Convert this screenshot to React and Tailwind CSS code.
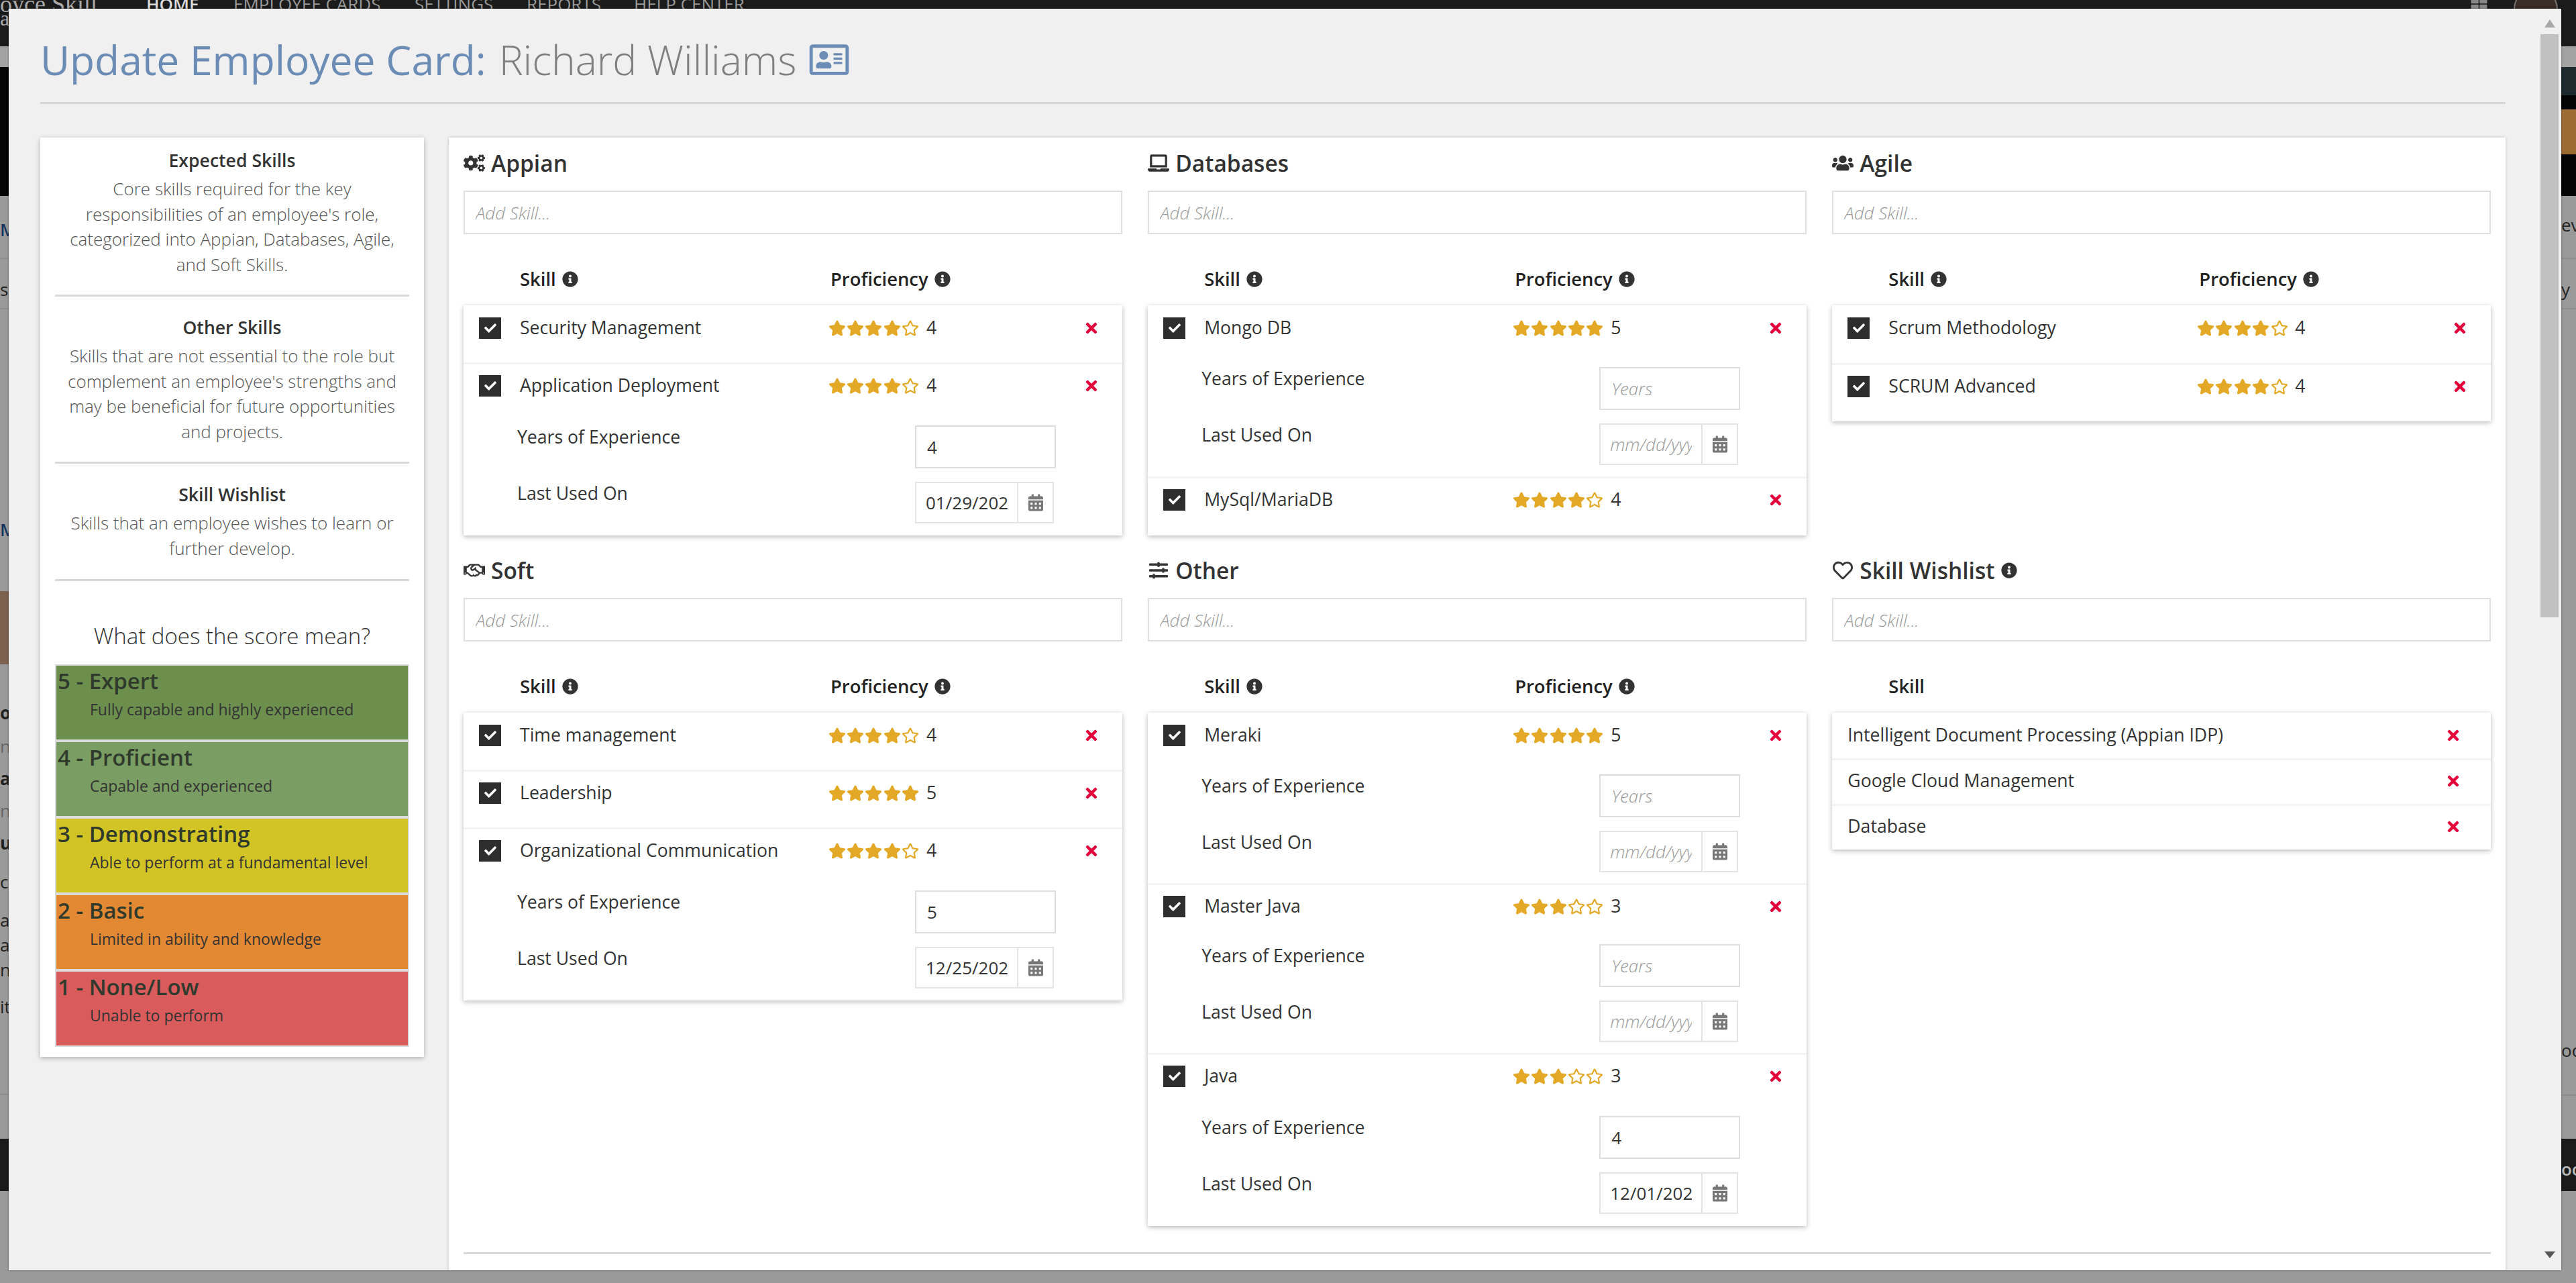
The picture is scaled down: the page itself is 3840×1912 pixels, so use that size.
import React from 'react';
import { FaCogs, FaLaptop, FaUsers, FaRegHandshake, FaSlidersH, FaRegHeart, FaInfoCircle, FaCheck, FaTimes, FaStar, FaRegStar, FaCalendarAlt, FaRegAddressCard, FaThLarge } from 'react-icons/fa';

function Info() {
  return <FaInfoCircle className="ml-[9px] inline-block h-[24px] w-[24px] shrink-0 text-[#333]" />;
}

function Stars({ n }) {
  return (
    <div className="flex w-[137px] shrink-0 items-center">
      {[1, 2, 3, 4, 5].map((i) => (
        <div key={i} className="flex w-[27.4px] justify-center">
          {i <= n ? <FaStar className="h-[24px] w-[26px] text-[#e3a826]" /> : <FaRegStar className="h-[24px] w-[26px] text-[#e3a826]" />}
        </div>
      ))}
    </div>
  );
}

function Check() {
  return (
    <div className="flex h-[32px] w-[33px] shrink-0 items-center justify-center bg-[#2e2e2e]">
      <FaCheck className="h-[18px] w-[18px] text-white" />
    </div>
  );
}

function SkillRow({ name, n, height, detail, gap, years, date }) {
  return (
    <div className={`border-t-[3px] border-[#f3f3f3] pt-[15px] first:border-white first:pt-[14px] ${height}`}>
      <div className="flex h-[33px] items-center pl-[23px] text-[26.6px] text-[#333]">
        <Check />
        <div className="ml-[28px] w-[459px] shrink-0 whitespace-nowrap">{name}</div>
        <Stars n={n} />
        <div className="ml-[10px] w-[236px] shrink-0">{n}</div>
        <FaTimes className="h-[24px] w-[20px] shrink-0 text-[#e2003b]" />
      </div>
      {detail && (
        <div className={`${gap} flex flex-col gap-[20px] text-[26.6px] text-[#333]`}>
          <div className="flex h-[64px] pl-[80px]">
            <div className="mt-[-1px] w-[593px] shrink-0 leading-[36px]">Years of Experience</div>
            <input readOnly value={years} placeholder="Years" className="h-[64px] w-[210px] border-2 border-[#dedede] bg-white px-[16px] text-[26px] text-[#333] outline-none placeholder:font-light placeholder:italic placeholder:text-[#999]" />
          </div>
          <div className="flex h-[62px] pl-[80px]">
            <div className="mt-[-1px] w-[593px] shrink-0 leading-[36px]">Last Used On</div>
            <div className="flex h-[62px] w-[207px] border-2 border-[#e4e4e4] bg-white">
              <input readOnly value={date} placeholder="mm/dd/yyyy" className="w-[152px] border-r-2 border-[#e4e4e4] bg-white pl-[14px] pr-[14px] text-[26px] text-[#333] outline-none placeholder:font-light placeholder:italic placeholder:text-[#999]" />
              <div className="flex flex-1 items-center justify-center">
                <FaCalendarAlt className="h-[26px] w-[22px] text-[#777]" />
              </div>
            </div>
          </div>
        </div>
      )}
    </div>
  );
}

function Section({ icon, title, titleInfo, children, wishlist }) {
  return (
    <div>
      <div className="flex h-[42px] items-center text-[33.5px] font-semibold text-[#333]">
        <span className="mr-[9px] flex w-[32px] justify-center">{icon}</span>
        {title}
        {titleInfo && <Info />}
      </div>
      <input readOnly placeholder="Add Skill..." className="mt-[20px] block h-[65px] w-full border-2 border-[#e0e0e0] bg-white px-[16px] text-[26px] outline-none placeholder:font-light placeholder:italic placeholder:text-[#999]" />
      <div className="mt-[47px] flex h-[40px] items-center pl-[84px] text-[27.4px] font-semibold text-[#222]">
        <div className="flex w-[463px] items-center">
          Skill
          {!wishlist && <Info />}
        </div>
        {!wishlist && (
          <div className="flex items-center">
            Proficiency
            <Info />
          </div>
        )}
      </div>
      <div className="mt-[19px] bg-white shadow-[0_2px_7px_rgba(0,0,0,0.28)]">{children}</div>
    </div>
  );
}

function WishRow({ name }) {
  return (
    <div className="flex h-[68px] items-center border-t-[3px] border-[#f3f3f3] pb-[4px] pl-[23px] text-[26.6px] text-[#333] first:border-white">
      <div className="w-[893px] shrink-0 whitespace-nowrap">{name}</div>
      <FaTimes className="h-[24px] w-[20px] shrink-0 text-[#e2003b]" />
    </div>
  );
}

function Explain({ title, children, pt }) {
  return (
    <div className={`${pt} border-b-[3px] border-[#d9d9d9] text-center`}>
      <div className="text-[26.6px] font-semibold leading-[38px] text-[#333]">{title}</div>
      <div className="mt-[5px] px-[8px] text-[26px] font-light leading-[37.5px] text-[#555]">{children}</div>
    </div>
  );
}

function Score({ title, text, bg }) {
  return (
    <div className={`h-[110px] ${bg} pl-[2px] text-[#333]`}>
      <div className="pt-[3px] text-[33px] font-semibold leading-[40px] text-[#2f3a2c]">{title}</div>
      <div className="mt-[5px] pl-[48px] text-[23px] leading-[34px]">{text}</div>
    </div>
  );
}

function Backdrop() {
  return (
    <div className="flex h-[1912px] flex-col bg-[#9a9a9a] text-[26px] text-[#222]">
      <div className="h-[69px] shrink-0 overflow-hidden bg-[#1b1b1b]">
        <div className="-mt-[12px] flex h-[36px] items-center text-[26px] text-[#9a9a9a]">
          <span className="-ml-[14px] w-[232px] shrink-0 font-['Liberation_Serif'] text-[36px] text-[#aaa]">Joyce Skill</span>
          <span className="w-[130px] shrink-0 font-semibold text-[#ddd]">HOME</span>
          <span className="w-[270px] shrink-0">EMPLOYEE CARDS</span>
          <span className="w-[167px] shrink-0">SETTINGS</span>
          <span className="w-[160px] shrink-0">REPORTS</span>
          <span className="shrink-0">HELP CENTER</span>
          <FaThLarge className="ml-auto mr-[31px] h-[24px] w-[41px] text-[#888]" />
          <div className="mr-[27px] mt-[16px] h-[66px] w-[66px] rounded-full border-2 border-[#777] bg-[#3a2c26]" />
        </div>
        <div className="-mt-[12px] h-[30px] w-[13px] overflow-hidden font-['Liberation_Serif'] text-[32px] leading-[30px] text-[#aaa]">a</div>
      </div>
      <div className="h-[31px] shrink-0 bg-[#a2a2a2]" />
      <div className="flex h-[192px] shrink-0 justify-end bg-[#050505]">
        <div className="w-[22px]">
          <div className="h-[42px] bg-[#1f2a2e]" />
          <div className="mt-[21px] h-[67px] bg-[#9c6a33]" />
        </div>
      </div>
      <div className="flex h-[1405px] shrink-0 justify-between">
        <div className="w-[13px] overflow-hidden whitespace-nowrap leading-[30px]">
          <div className="mt-[35px] h-[30px] font-semibold text-[#16335f]">M</div>
          <div className="mt-[27px] h-[2px] bg-[#8d8d8d]" />
          <div className="mt-[30px] h-[30px]">s</div>
          <div className="mt-[13px] h-[2px] bg-[#8d8d8d]" />
          <div className="mt-[313px] h-[30px] font-semibold text-[#16335f]">M</div>
          <div className="mt-[77px] h-[109px] bg-[#7d6250]" />
          <div className="mt-[57px] h-[30px] font-bold">oi</div>
          <div className="mt-[20px] h-[30px] text-[#666]">ne</div>
          <div className="mt-[18px] h-[30px] font-bold">a</div>
          <div className="mt-[18px] h-[30px] text-[#666]">ne</div>
          <div className="mt-[18px] h-[30px] font-bold">u</div>
          <div className="mt-[28px] h-[30px]">c</div>
          <div className="mt-[27px] h-[30px]">ar</div>
          <div className="mt-[7px] h-[30px]">a</div>
          <div className="mt-[7px] h-[30px]">n</div>
          <div className="mt-[25px] h-[30px]">it</div>
          <div className="mt-[115px] h-[2px] bg-[#8d8d8d]" />
        </div>
        <div className="w-[22px] overflow-hidden whitespace-nowrap leading-[30px]">
          <div className="mt-[28px] h-[30px]">ev</div>
          <div className="mt-[34px] h-[2px] bg-[#8d8d8d]" />
          <div className="mt-[30px] h-[30px]">y</div>
          <div className="mt-[13px] h-[2px] bg-[#8d8d8d]" />
          <div className="mt-[1089px] h-[30px]">od</div>
          <div className="mt-[51px] h-[2px] bg-[#8d8d8d]" />
        </div>
      </div>
      <div className="flex h-[78px] shrink-0 items-center justify-end bg-[#1b1b1b] pt-[12px] font-semibold text-[#bbb]">
        <span className="w-[22px] overflow-hidden">oo</span>
      </div>
    </div>
  );
}

export default function App() {
  const soft = "h-[86px]";
  return (
    <div className="relative h-[1912px] overflow-hidden font-[family-name:'Open_Sans',sans-serif]">
      <Backdrop />
      <div className="absolute left-[13px] top-[13px] flex h-[1880px] w-[3805px] overflow-hidden bg-[#f0f0f0] shadow-[0_0_3px_rgba(0,0,0,0.4)]">
        <div className="w-[3774px] shrink-0 pl-[47px]">
          <div className="w-[3675px] border-b-[3px] border-[#d6d6d6]">
            <div className="flex h-[139px] items-center pt-[13px] text-[60.5px] font-light text-[#7f7f7f]">
              <span className="font-normal text-[#6a8cb5]">Update Employee Card</span>
              <span className="font-normal text-[#6a8cb5]">:</span>
              <span className="ml-[19px]">Richard Williams</span>
              <FaRegAddressCard className="ml-[19px] h-[52px] w-[60px] text-[#6a8cb5]" />
            </div>
          </div>
          <div className="mt-[50px] flex items-start gap-[37px]">
            <div className="w-[572px] shrink-0 bg-white px-[22px] pb-[15px] shadow-[0_2px_7px_rgba(0,0,0,0.28)]">
              <Explain title="Expected Skills" pt="pt-[15px] pb-[26px]">
                Core skills required for the key responsibilities of an employee's role, categorized into Appian, Databases, Agile, and Soft Skills.
              </Explain>
              <Explain title="Other Skills" pt="pt-[27px] pb-[26px]">
                Skills that are not essential to the role but complement an employee's strengths and may be beneficial for future opportunities and projects.
              </Explain>
              <Explain title="Skill Wishlist" pt="pt-[27px] pb-[27px]">
                Skills that an employee wishes to learn or further develop.
              </Explain>
              <div className="mt-[58px] text-center text-[33px] font-light leading-[48px] text-[#333]">What does the score mean?</div>
              <div className="mt-[18px] flex flex-col gap-[4px] border-2 border-[#dcdcdc] bg-[#dcdcdc]">
                <Score title="5 - Expert" text="Fully capable and highly experienced" bg="bg-[#6c8f4e]" />
                <Score title="4 - Proficient" text="Capable and experienced" bg="bg-[#7a9d63]" />
                <Score title="3 - Demonstrating" text="Able to perform at a fundamental level" bg="bg-[#d3c426]" />
                <Score title="2 - Basic" text="Limited in ability and knowledge" bg="bg-[#e38833]" />
                <Score title="1 - None/Low" text="Unable to perform" bg="bg-[#d95b5b]" />
              </div>
            </div>
            <div className="h-[1700px] w-[3066px] shrink-0 bg-white px-[22px] pt-[17px] shadow-[0_0_4px_rgba(0,0,0,0.2)]">
              <div className="grid grid-cols-3 items-start gap-x-[38.5px] gap-y-[31px]">
                <Section icon={<FaCogs className="h-[28px] w-[32px] text-[#333]" />} title="Appian">
                  <SkillRow name="Security Management" n={4} height="h-[85px]" />
                  <SkillRow name="Application Deployment" n={4} height="h-[258px]" detail gap="mt-[43px]" years="4" date="01/29/2024" />
                </Section>
                <Section icon={<FaLaptop className="h-[28px] w-[32px] text-[#333]" />} title="Databases">
                  <SkillRow name="Mongo DB" n={5} height="h-[255px]" detail gap="mt-[42px]" years="" date="" />
                  <SkillRow name="MySql/MariaDB" n={4} height="h-[88px]" />
                </Section>
                <Section icon={<FaUsers className="h-[28px] w-[32px] text-[#333]" />} title="Agile">
                  <SkillRow name="Scrum Methodology" n={4} height="h-[86px]" />
                  <SkillRow name="SCRUM Advanced" n={4} height="h-[87px]" />
                </Section>
                <Section icon={<FaRegHandshake className="h-[28px] w-[32px] text-[#333]" />} title="Soft">
                  <SkillRow name="Time management" n={4} height="h-[85px]" />
                  <SkillRow name="Leadership" n={5} height={soft} />
                  <SkillRow name="Organizational Communication" n={4} height="h-[258px]" detail gap="mt-[43px]" years="5" date="12/25/2024" />
                </Section>
                <Section icon={<FaSlidersH className="h-[28px] w-[32px] text-[#333]" />} title="Other">
                  <SkillRow name="Meraki" n={5} height="h-[254px]" detail gap="mt-[42px]" years="" date="" />
                  <SkillRow name="Master Java" n={3} height="h-[253px]" detail gap="mt-[40px]" years="" date="" />
                  <SkillRow name="Java" n={3} height="h-[258px]" detail gap="mt-[43px]" years="4" date="12/01/2024" />
                </Section>
                <Section icon={<FaRegHeart className="h-[30px] w-[32px] text-[#333]" />} title="Skill Wishlist" titleInfo wishlist>
                  <WishRow name="Intelligent Document Processing (Appian IDP)" />
                  <WishRow name="Google Cloud Management" />
                  <WishRow name="Database" />
                </Section>
              </div>
              <div className="mt-[39px] border-t-[3px] border-[#d9d9d9]" />
            </div>
          </div>
        </div>
        <div className="flex w-[31px] shrink-0 flex-col pt-[16px]">
          <div className="ml-[6px] h-[12px] w-[16px] bg-[#a8a8a8] [clip-path:polygon(50%_0,100%_100%,0_100%)]" />
          <div className="mt-[10px] h-[869px] w-[27px] bg-[#c1c1c1]" />
          <div className="ml-[6px] mt-[945px] h-[10px] w-[16px] bg-[#555] [clip-path:polygon(0_0,100%_0,50%_100%)]" />
        </div>
      </div>
    </div>
  );
}
